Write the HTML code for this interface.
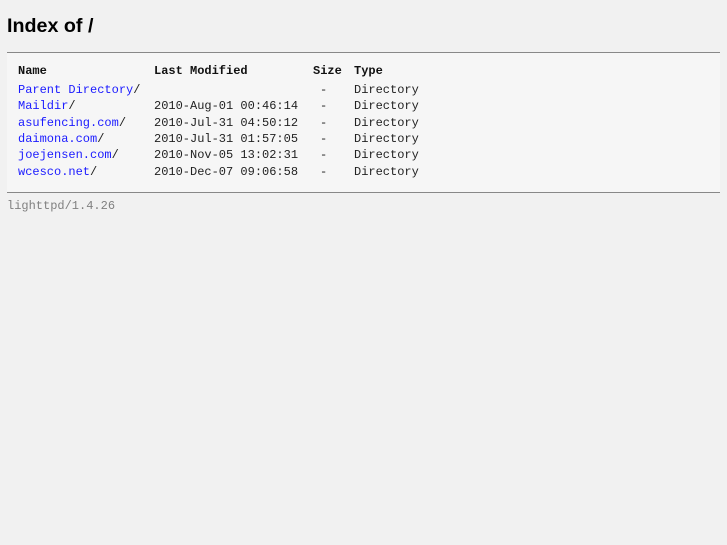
<!DOCTYPE html>
<html><head><style>
body{margin:0;background:#f1f1f1;width:727px;height:545px;position:relative;font-family:"Liberation Mono",monospace;}
h2{position:absolute;left:7px;top:15px;margin:0;font:bold 19.7px "Liberation Sans",sans-serif;color:#000;}
.list{position:absolute;left:7px;top:52px;width:713px;height:139px;background:#f6f6f6;border-top:1px solid #888;border-bottom:1px solid #888;}
.r{position:absolute;font-size:12px;line-height:14px;white-space:pre;color:#222;}
.h{font-weight:bold;color:#111}
a{color:#1a1aff;text-decoration:none}
.foot{position:absolute;left:7px;top:199px;font-size:12px;color:#808080;}
</style></head><body>
<h2>Index of /</h2>
<div class="list"></div>
<div class="r h" style="left:18px;top:64px">Name</div>
<div class="r h" style="left:154px;top:64px">Last Modified</div>
<div class="r h" style="left:313px;top:64px">Size</div>
<div class="r h" style="left:354px;top:64px">Type</div>

<div class="r" style="left:18px;top:83px"><a>Parent Directory</a>/</div>
<div class="r" style="left:320px;top:83px">-</div>
<div class="r" style="left:354px;top:83px">Directory</div>

<div class="r" style="left:18px;top:99px"><a>Maildir</a>/</div>
<div class="r" style="left:154px;top:99px">2010-Aug-01 00:46:14</div>
<div class="r" style="left:320px;top:99px">-</div>
<div class="r" style="left:354px;top:99px">Directory</div>

<div class="r" style="left:18px;top:116px"><a>asufencing.com</a>/</div>
<div class="r" style="left:154px;top:116px">2010-Jul-31 04:50:12</div>
<div class="r" style="left:320px;top:116px">-</div>
<div class="r" style="left:354px;top:116px">Directory</div>

<div class="r" style="left:18px;top:132px"><a>daimona.com</a>/</div>
<div class="r" style="left:154px;top:132px">2010-Jul-31 01:57:05</div>
<div class="r" style="left:320px;top:132px">-</div>
<div class="r" style="left:354px;top:132px">Directory</div>

<div class="r" style="left:18px;top:148px"><a>joejensen.com</a>/</div>
<div class="r" style="left:154px;top:148px">2010-Nov-05 13:02:31</div>
<div class="r" style="left:320px;top:148px">-</div>
<div class="r" style="left:354px;top:148px">Directory</div>

<div class="r" style="left:18px;top:165px"><a>wcesco.net</a>/</div>
<div class="r" style="left:154px;top:165px">2010-Dec-07 09:06:58</div>
<div class="r" style="left:320px;top:165px">-</div>
<div class="r" style="left:354px;top:165px">Directory</div>

<div class="foot">lighttpd/1.4.26</div>
</body></html>
